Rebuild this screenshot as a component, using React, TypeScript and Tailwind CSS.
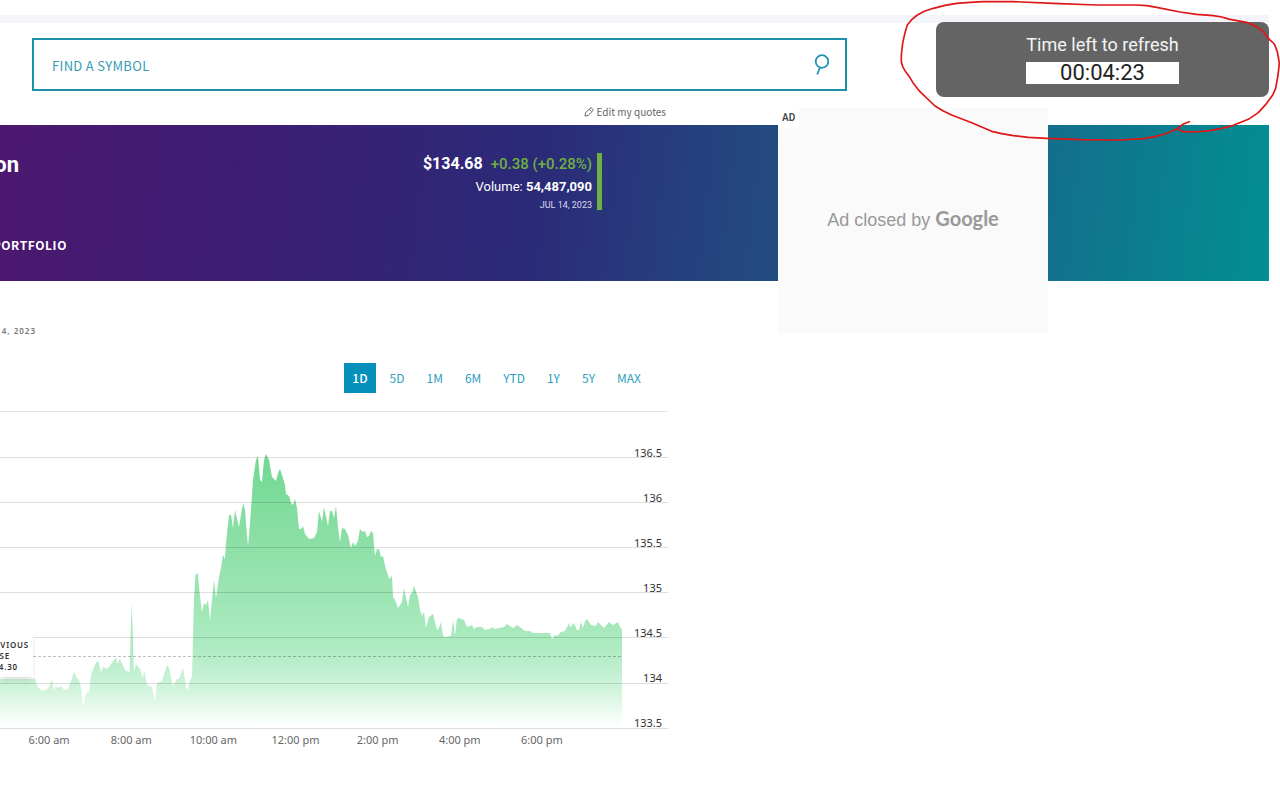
import { useState } from "react";
import clsx from "clsx";

const RANGES = ["1D", "5D", "1M", "6M", "YTD", "1Y", "5Y", "MAX"];
const PRICES = ["136.5", "136", "135.5", "135", "134.5", "134", "133.5"];
const HOURS = ["6:00 am", "8:00 am", "10:00 am", "12:00 pm", "2:00 pm", "4:00 pm", "6:00 pm"];
const GRID_LINES = [46, 91, 136, 181, 226, 272, 317];

// x,y pairs of the intraday series, in viewBox units
const SERIES = `0,268 33,268 35,267 37,275 42,280 48,278 52,268 54,280 56,274 57,277 61,275 64,279 68,278 71,270 74,261
77,267 79,269 81,276 83,297 86,282 89,281 91,264 95,254 97,250 99,252 101,262 103,256 107,258 112,252 116,246 117,253
120,248 125,259 127,260 129.5,261 131.7,192 134,262 136,253 140,258 143,267 144,259 147,274 152,276 155,290 157,272
162,270 167,254 169,257 173,275 177,268 179,268 183,257 187,280 190,269 192,266 193,229 194,186 195.5,164 197.7,162
199,176 202,201 204,192 206,194 208,189 210,210 213,179 214,169 216,187 219,166 221,157 223,144 225,148 226,132
229,104 231,104 233,117 235,99 239,116 243,92 245,99 248,136 251,99 253,69 256,49 258,45 260,69 262,71 264,49
266,43 269,49 272,66 276,70 278,62 280,58 282,64 285,74 286,83 289,85 291,92 293,94 295,88 297,97 299,118 301,118
303,115 305,123 309,128 314,127 317,121 319,100 322,111 324,96 328,115 330,100 332,100 334,107 336,95 338,116
340,131 342,117 345,118 348,124 351,137 353,131 355,135 358,130 360,118 363,121 365,120 367,126 369,125 371,120
373,122 375,145 377,138 379,138 381,146 383,145 386,159 387,161 389,168 392,165 393,186 395,189 398,197 402,191
404,177 408,196 410,184 412,182 414,175 418,186 420,199 422,205 424,201 426,217 429,206 433,203 437,219 439,217
441,211 443,225 445,226 451,225 453,209 455,224 457,208 459,207 464,209 467,216 472,214 474,218 477,216 482,216
485,219 490,218 493,216 494,218 499,217 504,216 507,213 513,217 517,214 525,220 530,220 533,222 550,222 552,228
555,224 557,225 561,221 565,220 569,212 570,216 574,212 577,219 579,219 581,211 583,217 585,210 587,208 591,214
596,215 598,211 604,217 609,211 613,214 618,211 621,218 622,217`;

function SearchBar() {
  return (
    <form
      className="mt-[15px] mr-[422px] ml-8 flex h-[53px] items-center border-2 border-[#1c8fa9] pr-4 pl-[18px]"
      onSubmit={(e) => e.preventDefault()}
    >
      <input
        type="text"
        aria-label="Find a symbol"
        placeholder="FIND A SYMBOL"
        className="min-w-0 flex-1 bg-transparent pt-0.5 font-['Noto_Sans_CJK_SC',sans-serif] text-[13px] tracking-wide text-[#1c8fa9] outline-none placeholder:text-[#3a9bb5]"
      />
      <button type="submit" aria-label="Search">
        <svg width="16" height="22" viewBox="0 0 16 22" fill="none" stroke="#2492b4" strokeWidth="1.8">
          <circle cx="9" cy="7.500" r="6.300" />
          <path d="M7 13.500 4.200 20.500" />
        </svg>
      </button>
    </form>
  );
}

function QuoteBanner() {
  return (
    <section className="flex h-[156px] overflow-hidden bg-[linear-gradient(97deg,#4c186f_0%,#3e1d73_18%,#2b2a78_42%,#234a80_60%,#136f8c_82%,#028f93_100%)] text-white">
      <div className="flex w-[67px] flex-col pt-[26px]">
        <h1 className="flex w-[19px] justify-end font-[Roboto,sans-serif] text-[22px] leading-7 font-bold">on</h1>
        <a
          href="#portfolio"
          className="mt-14 flex justify-end font-['Noto_Sans_CJK_SC',sans-serif] text-xs leading-5 font-bold tracking-wider"
        >
          PORTFOLIO
        </a>
      </div>
      <div className="flex-1" />
      <div className="mt-7 mr-[667px] h-[57px] border-r-[5px] border-[#6fb03f] pr-[5px] text-right font-[Roboto,sans-serif] whitespace-nowrap">
        <p className="text-base leading-[22px]">
          <strong className="font-bold">$134.68</strong>
          <span className="ml-2 text-[15px] font-medium text-[#6fb03f]">+0.38 (+0.28%)</span>
        </p>
        <p className="text-[13px] leading-6">
          Volume: <strong className="font-bold">54,487,090</strong>
        </p>
        <p className="text-[9px] leading-3 text-[#dcd9ee]">JUL 14, 2023</p>
      </div>
    </section>
  );
}

function AdSlot() {
  return (
    <aside className="absolute top-[108px] right-[232px] flex h-[225px] w-[270px] items-center justify-center bg-[#fafafa] text-[#999]">
      <span className="absolute top-0 left-0 bg-white px-1 font-[Roboto,sans-serif] text-[10px] leading-5 font-semibold text-[#444]">
        AD
      </span>
      <p className="pb-1 font-['Liberation_Sans',sans-serif] text-lg">
        Ad closed by <span className="font-[Lato,sans-serif] text-xl font-bold">Google</span>
      </p>
    </aside>
  );
}

function RefreshTimer() {
  return (
    <div className="absolute top-[22px] right-[11px] flex h-[75px] w-[333px] justify-center rounded-lg bg-[#646464] font-[Roboto,sans-serif]">
      <div className="pt-[11px] text-center">
        <p className="text-lg leading-6 text-[#f4f4f4]">Time left to refresh</p>
        <p className="mt-[5px] bg-white text-[22px] leading-[22px] text-[#222]">00:04:23</p>
      </div>
    </div>
  );
}

function PriceChart() {
  return (
    <div className="relative">
      <svg className="block h-[318px] w-full" viewBox="0 0 668 318" preserveAspectRatio="none">
        <defs>
          <linearGradient id="area" x1="0" y1="43" x2="0" y2="316" gradientUnits="userSpaceOnUse">
            <stop offset="0" stopColor="#70d891" />
            <stop offset="0.4" stopColor="#93e1ab" />
            <stop offset="0.7" stopColor="#acebc1" />
            <stop offset="0.85" stopColor="#cdf3d9" />
            <stop offset="1" stopColor="#ffffff" />
          </linearGradient>
        </defs>
        <polygon points={`0,316 ${SERIES} 622,316`} fill="url(#area)" />
        <path d="M0 .5H668" stroke="#e4e4e4" />
        {GRID_LINES.map((y) => (
          <path key={y} d={`M0 ${y + 0.5}H668`} stroke="#000" strokeOpacity="0.13" />
        ))}
        <path d="M33 245.500H622" stroke="#000" strokeOpacity="0.25" strokeDasharray="3 2" />
      </svg>

      <ul className="absolute top-[30px] right-[6px] text-right font-['Noto_Sans',sans-serif] text-[11px] text-[#333]">
        {PRICES.map((price) => (
          <li key={price} className="h-[45px] leading-6">
            {price}
          </li>
        ))}
      </ul>

      <div className="absolute top-[224px] left-0 h-[42px] w-[33px] overflow-hidden bg-white pt-1 font-['Noto_Sans',sans-serif] text-[8px] leading-[11px] font-semibold tracking-widest text-[#333] shadow-md">
        <p className="flex w-[29px] justify-end">VIOUS</p>
        <p className="flex w-[10px] justify-end">SE</p>
        <p className="flex w-[18px] justify-end">4.30</p>
      </div>

      <ul className="mr-[85px] ml-2 grid grid-cols-7 pt-[3px] text-center font-['Noto_Sans',sans-serif] text-[11px] leading-4 text-[#666]">
        {HOURS.map((hour) => (
          <li key={hour}>{hour}</li>
        ))}
      </ul>
    </div>
  );
}

// Freehand circle around the countdown
function RedMarker() {
  return (
    <svg
      className="pointer-events-none absolute top-0 right-0 h-40 w-[400px]"
      viewBox="0 0 1200 480"
      fill="none"
      stroke="#e01515"
      strokeWidth="5"
      strokeLinejoin="round"
      strokeLinecap="round"
    >
      <polyline points="928,365 908,373 895,384 875,394 855,402 825,410 790,416 720,420 600,419 500,415 445,412 400,407 365,401 335,394 275,368 215,345 190,333 165,318 120,275 100,250 88,230 75,212 68,200 64,185 64,165 68,130 75,98 82,75 95,59 112,45 133,34 160,25 195,16 230,10 270,7 310,5 400,5 520,10 650,15 770,15 800,17 830,22 900,36 950,43 1000,47 1025,51 1050,58 1100,67 1130,80 1150,95 1165,115 1183,132 1192,155 1198,190 1194,225 1187,265 1178,285 1160,310 1135,338 1105,358 1060,376 1025,385 990,392 940,396 910,395 895,389" />
    </svg>
  );
}

export default function App() {
  const [range, setRange] = useState("1D");

  return (
    <main className="relative min-h-screen overflow-hidden bg-white pt-[15px] pr-[11px]">
      <div className="h-2 bg-[#f4f4fb]" />
      <SearchBar />

      <div className="mr-[603px] flex h-[34px] justify-end pt-3">
        <a
          href="#quotes"
          className="flex h-[18px] items-center gap-[3px] font-['Noto_Sans_CJK_SC',sans-serif] text-[10px] leading-[18px] text-[#666]"
        >
          <svg width="10" height="10" viewBox="0 0 10 10" fill="none" stroke="#666">
            <path d="M1 9 1.600 5.800 6.200 1.200Q7 .5 7.800 1.200L8.800 2.200Q9.500 3 8.800 3.800L4.200 8.400ZM5.400 2.400 7.500 4.600" />
          </svg>
          Edit my quotes
        </a>
      </div>

      <QuoteBanner />

      <div className="mr-[601px]">
        <p className="mt-11 flex w-[36px] justify-end font-['Noto_Sans',sans-serif] text-[8px] leading-3 font-semibold tracking-[1px] whitespace-nowrap text-[#777]">
          4, 2023
        </p>
        <div className="mt-[26px] mb-[18px] flex justify-end gap-1.5 pr-[19px] font-['Noto_Sans_CJK_SC',sans-serif] text-xs">
          {RANGES.map((r) => (
            <button
              key={r}
              type="button"
              onClick={() => setRange(r)}
              className={clsx(
                "h-[30px] px-2 leading-[30px]",
                r === range ? "bg-[#0590bb] font-medium text-white" : "text-[#2c9fbe]"
              )}
            >
              {r}
            </button>
          ))}
        </div>
        <PriceChart />
      </div>

      <AdSlot />
      <RefreshTimer />
      <RedMarker />
    </main>
  );
}
